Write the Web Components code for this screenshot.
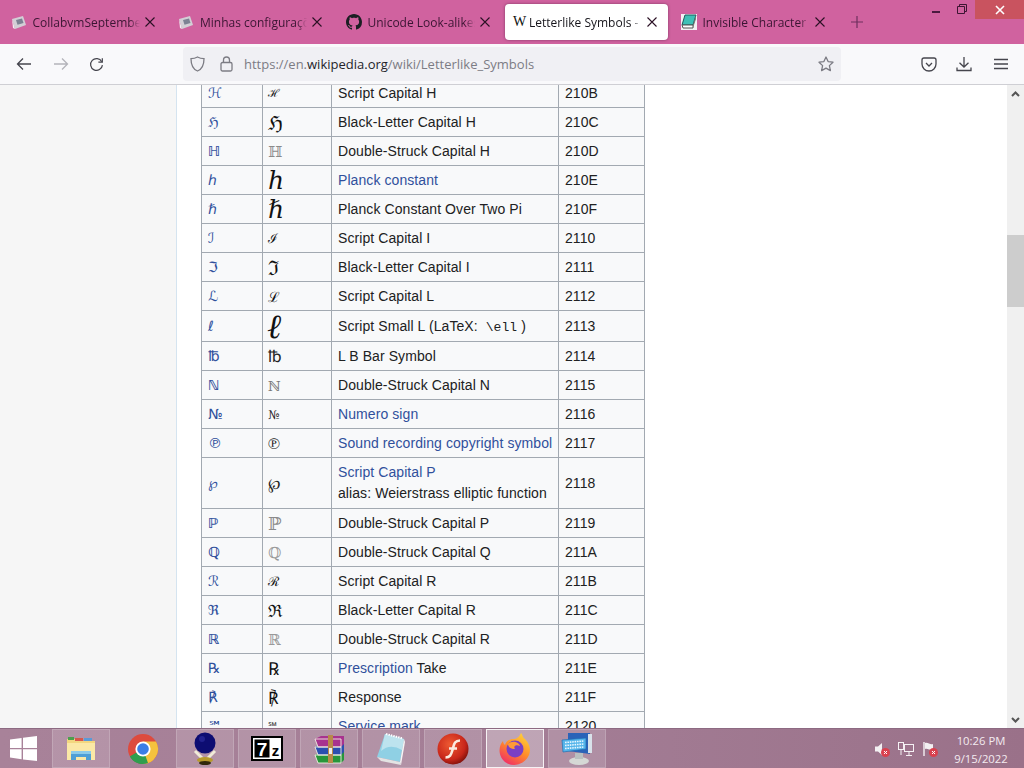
<!DOCTYPE html>
<html lang="en">
<head>
<meta charset="utf-8">
<title>Letterlike Symbols</title>
<style>
  html, body { margin: 0; height: 100%; overflow: hidden; }
  body { display: flex; flex-direction: column; width: 1024px; height: 768px; font-family: "Liberation Sans", Arial, sans-serif; }
</style>
</head>
<body>
<tab-strip></tab-strip>
<nav-toolbar></nav-toolbar>
<page-view></page-view>
<task-bar></task-bar>

<script>
const ICONS = {
  vm: `<svg viewBox="0 0 16 16" width="16" height="16"><path d="M1 5 L12 2 L15 11 L4 15 Z" fill="#d3cfd6"/><path d="M5 6 L11 4.5 L12.5 9 L6.5 10.8 Z" fill="#7d8294"/><path d="M1 5 L4 15 L2 14 Z" fill="#f1eef1"/></svg>`,
  github: `<svg viewBox="0 0 16 16" width="16" height="16"><path fill="#1b1f23" d="M8 0C3.58 0 0 3.58 0 8c0 3.54 2.29 6.53 5.47 7.59.4.07.55-.17.55-.38 0-.19-.01-.82-.01-1.49-2.01.37-2.53-.49-2.69-.94-.09-.23-.48-.94-.82-1.13-.28-.15-.68-.52-.01-.53.63-.01 1.08.58 1.23.82.72 1.21 1.87.87 2.33.66.07-.52.28-.87.51-1.07-1.78-.2-3.64-.89-3.64-3.95 0-.87.31-1.59.82-2.15-.08-.2-.36-1.02.08-2.12 0 0 .67-.21 2.2.82.64-.18 1.32-.27 2-.27s1.36.09 2 .27c1.53-1.04 2.2-.82 2.2-.82.44 1.1.16 1.92.08 2.12.51.56.82 1.27.82 2.15 0 3.07-1.87 3.75-3.65 3.95.29.25.54.73.54 1.48 0 1.07-.01 1.93-.01 2.2 0 .21.15.46.55.38A8.01 8.01 0 0 0 16 8c0-4.42-3.58-8-8-8z"/></svg>`,
  book: `<svg viewBox="0 0 16 16" width="16" height="16"><rect x="0" y="0" width="16" height="16" fill="#f4f2f4"/><path d="M4 1 H15 L12 11 H1 Z" fill="#3fc0b6" stroke="#1d5a5c"/><path d="M1 11 H12 L12 14 H2 Z" fill="#fff" stroke="#555"/><path d="M12 11 L15 1 V5 L12 14 Z" fill="#777"/></svg>`,
  close: `<svg viewBox="0 0 10 10" width="10" height="10"><path d="M.5 .5 L9.5 9.5 M9.5 .5 L.5 9.5" stroke="currentColor" stroke-width="1.1" fill="none"/></svg>`
};

class TabItem extends HTMLElement {
  connectedCallback() {
    const icon = this.getAttribute('icon');
    this.attachShadow({ mode: 'open' });
    this.shadowRoot.innerHTML = `
      <style>
        :host {
          display: flex;
          align-items: center;
          width: 163px;
          height: 36px;
          flex: none;
          box-sizing: border-box;
          padding: 0 11px 0 8px;
          border-radius: 4px;
          color: #3b1533;
          font: 12px "Open Sans", "Noto Sans", sans-serif;
        }
        :host([active]) {
          background: #fff;
          color: #15141a;
          box-shadow: 0 0 3px rgba(60, 20, 50, .55);
        }
        :host([active]) .icon { margin-right: 0; justify-content: flex-start; }
        .icon { width: 16px; height: 16px; flex: none; margin-right: 6px; display: flex; align-items: center; justify-content: center; }
        .w { font: 14px "Liberation Serif", serif; color: #111; }
        .title {
          flex: 1;
          min-width: 0;
          overflow: hidden;
          white-space: nowrap;
          -webkit-mask-image: linear-gradient(to right, #000 90%, transparent 100%);
          mask-image: linear-gradient(to right, #000 90%, transparent 100%);
        }
        .close { flex: none; width: 10px; height: 10px; margin-left: 5px; display: flex; color: #2a1024; }
      </style>
      <span class="icon">${icon === 'w' ? '<span class="w">W</span>' : ICONS[icon]}</span>
      <span class="title"><slot></slot></span>
      <span class="close">${ICONS.close}</span>
    `;
  }
}

class TabStrip extends HTMLElement {
  connectedCallback() {
    this.attachShadow({ mode: 'open' });
    this.shadowRoot.innerHTML = `
      <style>
        :host {
          display: flex;
          position: relative;
          height: 44px;
          flex: none;
          box-sizing: border-box;
          padding: 4px 0 4px 2.5px;
          gap: 4.5px;
          background: #d0629f;
        }
        .plus { width: 14px; height: 36px; margin-left: 10px; display: flex; align-items: center; color: #6e2f5e; }
        .win { position: absolute; top: 0; left: 0; right: 0; height: 19px; pointer-events: none; }
        .min { position: absolute; left: 932px; top: 11px; width: 8px; height: 2px; background: #4a1a3e; }
        .restore { position: absolute; left: 957px; top: 4px; }
        .x { position: absolute; left: 975px; top: 0; width: 49px; height: 19px; background: #c9535f; display: flex; align-items: center; justify-content: center; color: #fff; }
      </style>
      <tab-item icon="vm">CollabvmSeptember</tab-item>
      <tab-item icon="vm">Minhas configurações</tab-item>
      <tab-item icon="github">Unicode Look-alikes</tab-item>
      <tab-item icon="w" active>Letterlike Symbols - Wikipedia</tab-item>
      <tab-item icon="book">Invisible Character - Wikipedia</tab-item>
      <span class="plus"><svg width="14" height="14" viewBox="0 0 14 14"><path d="M7 1 V13 M1 7 H13" stroke="currentColor" stroke-width="1.2"/></svg></span>
      <div class="win">
        <span class="min"></span>
        <svg class="restore" width="10" height="10" viewBox="0 0 10 10"><path d="M2.5 2.5 V.5 H9.5 V7.5 H7.5 M.5 2.5 H7.5 V9.5 H.5 Z" fill="none" stroke="#3d1533"/></svg>
        <span class="x"><svg width="10" height="10" viewBox="0 0 10 10"><path d="M1 1 L9 9 M9 1 L1 9" stroke="#fff" stroke-width="1.6"/></svg></span>
      </div>
    `;
  }
}

class NavToolbar extends HTMLElement {
  connectedCallback() {
    this.attachShadow({ mode: 'open' });
    this.shadowRoot.innerHTML = `
      <style>
        :host {
          display: flex;
          align-items: center;
          height: 41px;
          flex: none;
          box-sizing: border-box;
          background: #f9f9fb;
          border-bottom: 1px solid #cfcfd4;
          color: #45454d;
        }
        svg { display: block; flex: none; fill: none; stroke: currentColor; stroke-width: 1.3; }
        .btns { display: flex; align-items: center; gap: 21px; width: 183px; padding-left: 16px; box-sizing: border-box; }
        .fwd { color: #b4b4ba; }
        .reload { margin-left: -1px; }
        .url {
          display: flex;
          align-items: center;
          width: 658px;
          height: 34px;
          flex: none;
          box-sizing: border-box;
          padding: 0 7px 0 7px;
          background: #f0f0f4;
          border-radius: 4px;
          font: 13px "Open Sans", "Noto Sans", sans-serif;
          color: #7c7c84;
        }
        .addr { margin-left: 11px; flex: 1; white-space: nowrap; }
        .addr b { font-weight: 400; color: #24242a; }
        .lock { margin-left: 15px; }
        .tools { display: flex; align-items: center; gap: 19px; margin-left: 80px; }
      </style>
      <div class="btns">
        <svg width="16" height="14" viewBox="0 0 16 14"><path d="M15 7 H1.5 M7 1.5 L1.5 7 L7 12.5"/></svg>
        <svg class="fwd" width="16" height="14" viewBox="0 0 16 14"><path d="M1 7 H14.5 M9 1.5 L14.5 7 L9 12.5"/></svg>
        <svg class="reload" width="15" height="15" viewBox="0 0 16 16"><path d="M13.6 5 A6.3 6.3 0 1 0 14.3 8.6"/><path d="M14.2 1.2 V5.4 H10" /></svg>
      </div>
      <div class="url">
        <svg width="15" height="16" viewBox="0 0 15 16"><path d="M7.5 1 C5.5 2.2 3 2.7 1 2.7 C1 8 2.5 13 7.5 15 C12.5 13 14 8 14 2.7 C12 2.7 9.5 2.2 7.5 1 Z"/></svg>
        <svg class="lock" width="13" height="16" viewBox="0 0 13 16"><rect x="1" y="6.5" width="11" height="8.5" rx="1.5"/><path d="M3.5 6.5 V4 A3 3 0 0 1 9.5 4 V6.5"/></svg>
        <span class="addr">https://en.<b>wikipedia.org</b>/wiki/Letterlike_Symbols</span>
        <svg width="16" height="16" viewBox="0 0 16 16"><path d="M8 1 L10.1 5.6 L15 6.2 L11.4 9.6 L12.4 14.6 L8 12.1 L3.6 14.6 L4.6 9.6 L1 6.2 L5.9 5.6 Z" stroke-linejoin="round"/></svg>
      </div>
      <div class="tools">
        <svg width="16" height="15" viewBox="0 0 16 15"><path d="M1 3 A2 2 0 0 1 3 1 H13 A2 2 0 0 1 15 3 V7 A7 7 0 0 1 1 7 Z"/><path d="M5 6 L8 9 L11 6"/></svg>
        <svg width="16" height="16" viewBox="0 0 16 16"><path d="M8 1 V11 M3.5 6.8 L8 11 L12.5 6.8 M1 11.5 V14.5 H15 V11.5"/></svg>
        <svg style="margin-left:3px" width="14" height="12" viewBox="0 0 14 12"><path d="M0 1.5 H14 M0 6 H14 M0 10.5 H14"/></svg>
      </div>
    `;
  }
}

// symbol, size and colour in the second column, name, code, row height, extra class for the second column
const ROWS = [
  ['ℋ', 11, '#111', 'Script Capital H', '210B'],
  ['ℌ', 20, '#111', 'Black-Letter Capital H', '210C'],
  ['ℍ', 15, '#8a8a8a', 'Double-Struck Capital H', '210D', 0, 'ds'],
  ['ℎ', 25, '#111', '<a>Planck constant</a>', '210E', 0, 'it'],
  ['ℏ', 25, '#111', 'Planck Constant Over Two Pi', '210F', 0, 'it'],
  ['ℐ', 13, '#111', 'Script Capital I', '2110'],
  ['ℑ', 20, '#111', 'Black-Letter Capital I', '2111'],
  ['ℒ', 14, '#111', 'Script Capital L', '2112'],
  ['ℓ', 34, '#111', 'Script Small L (LaTeX: <code>\\ell</code>)', '2113', 31, 'ell'],
  ['℔', 16, '#222', 'L B Bar Symbol', '2114'],
  ['ℕ', 14, '#777', 'Double-Struck Capital N', '2115', 0, 'ds'],
  ['№', 12, '#222', '<a>Numero sign</a>', '2116'],
  ['℗', 16, '#111', '<a>Sound recording copyright symbol</a>', '2117'],
  ['℘', 15, '#222', '<a>Script Capital P</a><br>alias: Weierstrass elliptic function', '2118', 51],
  ['ℙ', 18, '#8a8a8a', 'Double-Struck Capital P', '2119', 0, 'ds'],
  ['ℚ', 15, '#999', 'Double-Struck Capital Q', '211A', 0, 'ds'],
  ['ℛ', 13, '#111', 'Script Capital R', '211B'],
  ['ℜ', 17, '#111', 'Black-Letter Capital R', '211C'],
  ['ℝ', 15, '#999', 'Double-Struck Capital R', '211D', 0, 'ds'],
  ['℞', 18, '#111', '<a>Prescription</a> Take', '211E'],
  ['℟', 17, '#111', 'Response', '211F'],
  ['℠', 11, '#333', '<a>Service mark</a>', '2120']
];

class SymbolTable extends HTMLElement {
  connectedCallback() {
    this.attachShadow({ mode: 'open' });
    const rows = ROWS.map(([sym, size, color, name, code, h, cls]) => `
      <tr style="height:${h || 29}px">
        <td class="sym ${cls || ''}"><a>${sym}</a></td>
        <td class="big ${cls || ''}" style="font-size:${size}px;color:${color}">${sym}</td>
        <td class="name">${name}</td>
        <td>${code}</td>
      </tr>`).join('');
    this.shadowRoot.innerHTML = `
      <style>
        :host { display: block; width: 444px; margin-top: -7px; }
        table {
          border-collapse: collapse;
          table-layout: fixed;
          width: 443px;
          background: #f8f9fa;
          color: #202122;
          font: 14px/21px "Liberation Sans", Arial, sans-serif;
          letter-spacing: .08px;
        }
        td { border: 1px solid #a2a9b1; padding: 0 6px; white-space: nowrap; }
        a { color: #30509c; }
        .sym { font: 14px/20px "DejaVu Sans", sans-serif; letter-spacing: 0; }
        .sym.ds { font-weight: 700; }
        .big { font-family: "DejaVu Serif", serif; line-height: 20px; padding: 2px 0 0 5px; letter-spacing: 0; }
        .big.it { font-style: italic; }
        .big.ell { font-family: "Liberation Serif", serif; font-style: italic; padding-left: 4px; }
        code { font: 13px "Liberation Mono", monospace; padding: 0 4px; }
      </style>
      <table>
        <colgroup><col style="width:61px"><col style="width:69px"><col style="width:227px"><col style="width:86px"></colgroup>
        ${rows}
      </table>
    `;
  }
}

class PageView extends HTMLElement {
  connectedCallback() {
    this.attachShadow({ mode: 'open' });
    this.shadowRoot.innerHTML = `
      <style>
        :host { display: flex; flex: 1; min-height: 0; overflow: hidden; background: #f6f6f6; }
        .side { width: 176px; flex: none; }
        .article {
          flex: 1;
          overflow: hidden;
          background: #fff;
          border-left: 1px solid #d5e4f0;
          padding-left: 24px;
        }
        .bar { width: 17px; flex: none; display: flex; flex-direction: column; background: #f0f0f0; }
        .arrow { height: 17px; flex: none; display: flex; align-items: center; justify-content: center; }
        .track { flex: 1; }
        .thumb { height: 72px; margin-top: 133px; background: #cdcdcd; }
        svg { fill: none; stroke: #555; stroke-width: 2; }
      </style>
      <div class="side"></div>
      <div class="article"><symbol-table></symbol-table></div>
      <div class="bar">
        <div class="arrow"><svg width="9" height="6" viewBox="0 0 9 6"><path d="M1 5 L4.5 1.5 L8 5"/></svg></div>
        <div class="track"><div class="thumb"></div></div>
        <div class="arrow"><svg width="9" height="6" viewBox="0 0 9 6"><path d="M1 1 L4.5 4.5 L8 1"/></svg></div>
      </div>
    `;
  }
}

const APPS = {
  folder: `<svg width="32" height="32" viewBox="0 0 32 32"><path d="M2 6 H12 L14 8 H30 V27 H2 Z" fill="#f3d77f"/><rect x="3" y="4" width="6" height="3" fill="#4da04d"/><rect x="10" y="5" width="8" height="3" fill="#d9584a"/><rect x="19" y="5" width="8" height="3" fill="#5a9bd8"/><rect x="2" y="10" width="28" height="17" fill="#fbe8a6"/><path d="M6 27 V20 H26 V27 H21 V24 H11 V27 Z" fill="#4f9fd6"/><rect x="6" y="18" width="20" height="3" fill="#8ccbea"/></svg>`,
  chrome: `<svg width="32" height="32" viewBox="0 0 32 32"><circle cx="16" cy="16" r="15" fill="#dd4b3e"/><path d="M16 16 L3 23.5 A15 15 0 0 0 16 31 Z" fill="#2f9e4f"/><path d="M16 16 L16 31 A15 15 0 0 0 29 8.5 L16 8.5 Z" fill="#f5c23e"/><path d="M16 16 L3 23.5 A15 15 0 0 0 21 30 Z" fill="#2f9e4f"/><circle cx="16" cy="16" r="7.6" fill="#fff"/><circle cx="16" cy="16" r="5.8" fill="#3b7ee6"/></svg>`,
  orb: `<svg width="30" height="34" viewBox="0 0 30 34"><path d="M5 19 L13 27 M25 19 L17 27" stroke="#f0ebd8" stroke-width="3"/><ellipse cx="15" cy="28" rx="8" ry="3" fill="#b79a2c"/><ellipse cx="15" cy="31" rx="6" ry="2" fill="#30290c"/><circle cx="15" cy="11" r="10.5" fill="#0d0d72"/><circle cx="12" cy="7" r="3" fill="#22228f"/></svg>`,
  sevenz: `<svg width="32" height="25" viewBox="0 0 32 25"><rect width="32" height="25" fill="#000"/><rect x="2" y="2" width="28" height="21" fill="#fff"/><rect x="3.5" y="3.5" width="15" height="18" fill="#000"/><text x="11" y="20" text-anchor="middle" font-family="Liberation Sans" font-weight="700" font-size="19" fill="#fff">7</text><text x="24.5" y="20" text-anchor="middle" font-family="Liberation Sans" font-weight="700" font-size="15" fill="#000">z</text></svg>`,
  rar: `<svg width="32" height="30" viewBox="0 0 32 30"><path d="M2 21 L8 18 H31 V26 L28 29 H5 Z" fill="#27963a"/><path d="M2 13 L8 10 H31 V18 L28 21 H5 Z" fill="#2a4fb0"/><path d="M2 5 L8 2 H31 V10 L28 13 H5 Z" fill="#a8338f"/><path d="M2 5 H28 V13 H5 Z M2 13 H28 V21 H5 Z M2 21 H28 V29 H5 Z" fill="none" stroke="#f2efe2" stroke-width=".9"/><rect x="15" y="1" width="5" height="28" fill="#b88a4a"/><rect x="16" y="14" width="3" height="6" fill="#eee"/></svg>`,
  notepad: `<svg width="30" height="32" viewBox="0 0 30 32"><path d="M9 1 L28 6 L24 29 L1 24 Z" fill="#8fd0e4"/><path d="M9 1 L28 6 L26 17 Q14 10 5 18 Z" fill="#bde3ee"/><path d="M28 6 L29 9 L25 32 L24 29 Z" fill="#f5f5f5"/><path d="M1 24 L24 29 L25 32 L5 28 Z" fill="#e3e3e3"/><path d="M10 1 L27 5.5" stroke="#fff" stroke-width="2" stroke-dasharray="1.5 1"/></svg>`,
  flash: `<svg width="32" height="32" viewBox="0 0 32 32"><defs><radialGradient id="fl" cx=".4" cy=".35" r=".7"><stop offset="0" stop-color="#ee5a32"/><stop offset=".7" stop-color="#c8261a"/><stop offset="1" stop-color="#7a0f0a"/></radialGradient></defs><circle cx="16" cy="16" r="15.5" fill="url(#fl)"/><path d="M23 7.5 C17 7.5 17 12 15.5 17 C14 22 13 24.5 8.5 24.5 M12 15.5 H20" fill="none" stroke="#fbeadf" stroke-width="2.6"/></svg>`,
  firefox: `<svg width="32" height="33" viewBox="0 0 32 33"><defs><linearGradient id="ff" x1="0.8" y1="0" x2="0.2" y2="1"><stop offset="0" stop-color="#ffd43a"/><stop offset=".5" stop-color="#ff8a2a"/><stop offset="1" stop-color="#f0286a"/></linearGradient></defs><path d="M22 1 C24 3 23 5 26 7 C31 12 32 18 30 23 C27 30 20 33 15 33 C7 33 1 27 0.5 19 C0.4 15 2 11 4 9 C4 11 5 12 6 13 C7 9 11 7 14 7 C18 7 20 5 22 1 Z" fill="url(#ff)"/><circle cx="16" cy="17" r="8.5" fill="#7b3fc4"/><path d="M9 12 C13 8 20 10 21 14 C17 12 14 14 16 17 C12 17 9 15 9 12 Z" fill="#ff9a35"/></svg>`,
  keyboard: `<svg width="34" height="34" viewBox="0 0 34 34"><path d="M8 1 H30 V22 L8 19 Z" fill="#2a63b8"/><path d="M28 2 H32 V21 H28 Z" fill="#d8e2ea"/><ellipse cx="19" cy="29" rx="10" ry="4" fill="#d5d8d5"/><rect x="15" y="21" width="8" height="6" fill="#b9c0c0"/><path d="M2 8 L26 6 V17 L3 20 Z" fill="#55b5ea" stroke="#1f6fb3" stroke-width=".7"/><path d="M5 10.5 L24 9 M5 13.5 L24 12 M5 16.5 L24 15" stroke="#e8f7ff" stroke-width="1.6" stroke-dasharray="1.6 .8"/></svg>`
};

class TaskTile extends HTMLElement {
  connectedCallback() {
    this.attachShadow({ mode: 'open' });
    this.shadowRoot.innerHTML = `
      <style>
        :host {
          display: flex;
          align-items: center;
          justify-content: center;
          width: 58px;
          height: 39px;
          flex: none;
          box-sizing: border-box;
        }
        :host([open]) { background: rgba(255, 255, 255, .15); border: 1px solid rgba(255, 255, 255, .18); }
        :host([active]) { background: rgba(255, 255, 255, .3); border: 1px solid rgba(255, 255, 255, .85); }
      </style>
      ${APPS[this.getAttribute('app')]}
    `;
  }
}

class TaskBar extends HTMLElement {
  connectedCallback() {
    this.attachShadow({ mode: 'open' });
    this.shadowRoot.innerHTML = `
      <style>
        :host {
          display: flex;
          align-items: flex-end;
          height: 40px;
          flex: none;
          box-sizing: border-box;
          background: linear-gradient(to right, #a88299, #a47e96 50%, #9a7189);
          border-top: 1px solid #8d6a82;
        }
        .start { width: 52px; height: 39px; flex: none; display: flex; align-items: center; padding-left: 10px; box-sizing: border-box; }
        .apps { display: flex; gap: 4px; flex: 1; }
        .tray { display: flex; align-items: center; height: 39px; gap: 8px; flex: none; }
        .clock { width: 60px; margin: 0 13px 0 5px; padding-top: 2px; text-align: center; color: #f3ebf0; font: 11.3px/18px "Open Sans", "Noto Sans", sans-serif; }
      </style>
      <div class="start">
        <svg width="27" height="25" viewBox="0 0 27 25"><path d="M0 3.6 L11.6 2 V12 H0 Z M13 1.8 L27 0 V12 H13 Z M0 13.2 H11.6 V23.2 L0 21.6 Z M13 13.2 H27 V25 L13 23.4 Z" fill="#fff"/></svg>
      </div>
      <div class="apps">
        <task-tile app="folder" open></task-tile>
        <task-tile app="chrome"></task-tile>
        <task-tile app="orb" open></task-tile>
        <task-tile app="sevenz" open></task-tile>
        <task-tile app="rar" open></task-tile>
        <task-tile app="notepad" open></task-tile>
        <task-tile app="flash" open></task-tile>
        <task-tile app="firefox" active></task-tile>
        <task-tile app="keyboard" open></task-tile>
      </div>
      <div class="tray">
        <svg width="16" height="16" viewBox="0 0 16 16"><path d="M1 5.5 H4 L8 2 V14 L4 10.5 H1 Z" fill="#f3f0f2"/><circle cx="11.5" cy="11.5" r="4.5" fill="#d9414f"/><path d="M10 10 L13 13 M13 10 L10 13" stroke="#fff"/></svg>
        <svg width="16" height="16" viewBox="0 0 16 16" fill="none" stroke="#f5f1f4"><rect x=".5" y="1.5" width="5" height="7"/><rect x="6.5" y="3.5" width="9" height="7"/><path d="M11 11 V14 M8 14.5 H14 M3 9 V14"/></svg>
        <svg width="16" height="16" viewBox="0 0 16 16"><path d="M2 1 V15" stroke="#f5f1f4" stroke-width="1.4"/><path d="M3 2 C6 1 8 4 11 3 V9 C8 10 6 7 3 8 Z" fill="#f3f0f2"/><circle cx="11.5" cy="11.5" r="4.5" fill="#d9414f"/><path d="M10 10 L13 13 M13 10 L10 13" stroke="#fff"/></svg>
        <div class="clock">10:26 PM<br>9/15/2022</div>
      </div>
    `;
  }
}

customElements.define('tab-item', TabItem);
customElements.define('tab-strip', TabStrip);
customElements.define('nav-toolbar', NavToolbar);
customElements.define('symbol-table', SymbolTable);
customElements.define('page-view', PageView);
customElements.define('task-tile', TaskTile);
customElements.define('task-bar', TaskBar);
</script>
</body>
</html>
